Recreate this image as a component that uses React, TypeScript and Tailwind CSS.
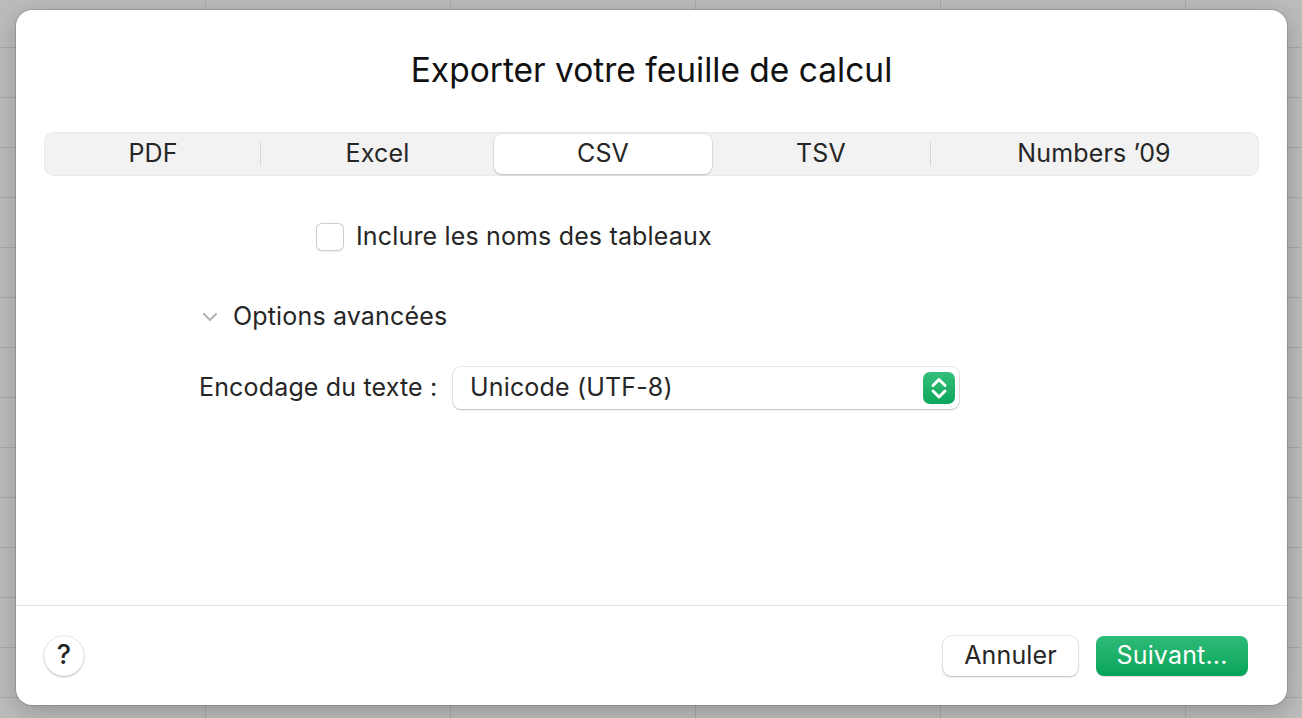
import React from "react";

const font = { fontFamily: "Inter, 'Noto Sans', 'Liberation Sans', sans-serif" };

function Sep() {
  return <div className="w-px h-[24px] self-center bg-[#d6d6d6]" />;
}

export default function App() {
  return (
    <div
      className="w-full h-[718px] overflow-hidden pl-[16px] pt-[10px] bg-[#bcbcbc] bg-[linear-gradient(to_right,#a9a9a9_1px,transparent_1px),linear-gradient(to_bottom,#a9a9a9_1px,transparent_1px)] bg-[size:245px_50px] bg-[position:205px_47px]"
      style={font}
    >
      <div className="w-[1271px] h-[695px] bg-white rounded-[16px] flex flex-col shadow-[0_0_0_1px_rgba(0,0,0,0.12),0_6px_24px_rgba(0,0,0,0.22)] text-[#262626] tracking-[0.01em]">
        <div className="flex-1 flex flex-col">
          <div className="mt-[42px] h-[36px] leading-[36px] text-center text-[33.5px] tracking-normal text-[#111]">
            Exporter votre feuille de calcul
          </div>

          <div className="mt-[44px] mx-[28px] h-[44px] rounded-[10px] bg-[#f2f2f2] shadow-[inset_0_0_0_1px_#e9e9e9] p-[2px] flex text-[25px]">
            <div className="w-[214px] flex items-center justify-center">PDF</div>
            <Sep />
            <div className="w-[233px] flex items-center justify-center">Excel</div>
            <div className="w-[218px] flex items-center justify-center bg-white rounded-[8px] shadow-[0_1px_2px_rgba(0,0,0,0.18),0_0_0_0.5px_rgba(0,0,0,0.1)]">
              CSV
            </div>
            <div className="w-[218px] flex items-center justify-center">TSV</div>
            <Sep />
            <div className="flex-1 flex items-center justify-center">Numbers ’09</div>
          </div>

          <div className="mt-[47px] ml-[300px] h-[28px] flex items-center gap-[12px]">
            <div className="w-[28px] h-[28px] rounded-[6px] bg-white shadow-[inset_0_0_0_1px_#cdcdcd,0_0.5px_1px_rgba(0,0,0,0.08)]" />
            <span className="text-[25px]">Inclure les noms des tableaux</span>
          </div>

          <div className="mt-[52px] ml-[186px] h-[28px] flex items-center">
            <svg width="16" height="10" viewBox="0 0 16 10" className="mr-[15px]">
              <polyline points="2,2 8,8 14,2" fill="none" stroke="#b4b4b4" strokeWidth="2.2" strokeLinecap="round" strokeLinejoin="round" />
            </svg>
            <span className="text-[25px]">Options avancées</span>
          </div>

          <div className="mt-[36px] ml-[183px] h-[42px] flex items-center">
            <span className="w-[254px] text-[25px]">Encodage du texte :</span>
            <div className="w-[506px] h-[42px] rounded-[8px] bg-white shadow-[0_0_0_1px_rgba(0,0,0,0.08),0_1px_2px_rgba(0,0,0,0.2)] flex items-center justify-between pl-[17px] pr-[4px]">
              <span className="text-[25px]">Unicode (UTF-8)</span>
              <div className="w-[32px] h-[32px] rounded-[7px] bg-gradient-to-b from-[#32bf7a] to-[#08a65b] flex items-center justify-center">
                <svg width="32" height="32" viewBox="0 0 32 32">
                  <polyline points="10,13.5 16,7.5 22,13.5" fill="none" stroke="white" strokeWidth="3" strokeLinecap="round" strokeLinejoin="round" />
                  <polyline points="10,19 16,25 22,19" fill="none" stroke="white" strokeWidth="3" strokeLinecap="round" strokeLinejoin="round" />
                </svg>
              </div>
            </div>
          </div>
        </div>

        <div className="h-px bg-[#e4e4e4]" />

        <div className="h-[99px] flex items-center pl-[28px] pr-[39px]">
          <div className="w-[40px] h-[40px] rounded-full bg-white shadow-[0_0_0_0.5px_rgba(0,0,0,0.15),0_1px_2px_rgba(0,0,0,0.22)] flex items-center justify-center text-[27px] font-medium text-[#222]">
            ?
          </div>
          <div className="flex-1" />
          <div className="w-[135px] h-[40px] rounded-[8px] bg-white shadow-[0_0_0_0.5px_rgba(0,0,0,0.15),0_1px_2px_rgba(0,0,0,0.22)] flex items-center justify-center text-[25px]">
            Annuler
          </div>
          <div className="ml-[18px] w-[152px] h-[40px] rounded-[8px] bg-gradient-to-b from-[#2dbb78] to-[#03a459] flex items-center justify-center text-[25px] text-white shadow-[0_0.5px_1px_rgba(0,0,0,0.15)]">
            Suivant...
          </div>
        </div>
      </div>
    </div>
  );
}
